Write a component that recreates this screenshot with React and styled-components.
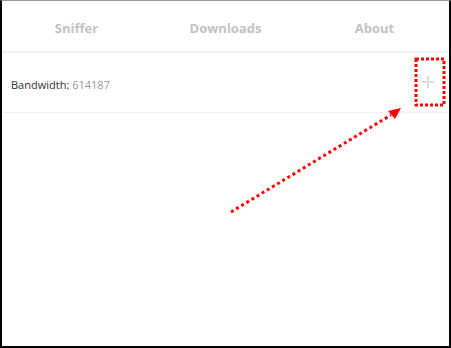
import React from "react";
import styled, { createGlobalStyle } from "styled-components";

const Global = createGlobalStyle`
  html, body { margin: 0; padding: 0; background: #fff; }
  body { font-family: "Open Sans", "Noto Sans", sans-serif; }
`;

const Frame = styled.div`
  position: relative;
  width: 451px;
  height: 348px;
  box-sizing: border-box;
  border: 2px solid #000;
  border-top: 1px solid #9a9a9a;
  background: #fff;
  overflow: hidden;
`;

const Tabs = styled.nav`
  display: grid;
  grid-template-columns: repeat(3, 1fr);
  height: 52px;
  box-sizing: border-box;
  padding-top: 3px;
  border-bottom: 2px solid #f1f1f1;
`;

const Tab = styled.div`
  display: flex;
  align-items: center;
  justify-content: center;
  font-size: 13px;
  font-weight: 700;
  color: ${({ active }) => (active ? "#555" : "#c3c3c3")};
`;

const Row = styled.div`
  display: flex;
  align-items: center;
  justify-content: space-between;
  height: 60px;
  box-sizing: border-box;
  padding: 4px 14px 0 9px;
  border-bottom: 1px solid #f1f1f1;
`;

const Label = styled.span`
  font-size: 11px;
  color: #333;
`;

const Value = styled.span`
  color: #9a9a9a;
`;

const AddBtn = styled.button`
  background: none;
  border: none;
  padding: 0;
  margin-top: -6px;
  width: 14px;
  height: 14px;
  display: flex;
  cursor: pointer;
`;

const Annotation = styled.svg`
  position: absolute;
  left: 0;
  top: 0;
  pointer-events: none;
`;

export default function App() {
  return (
    <>
      <Global />
      <Frame>
        <Tabs>
          <Tab>Sniffer</Tab>
          <Tab>Downloads</Tab>
          <Tab>About</Tab>
        </Tabs>
        <Row>
          <Label>
            Bandwidth: <Value>614187</Value>
          </Label>
          <AddBtn title="Add">
            <svg width="14" height="14" viewBox="0 0 14 14">
              <path d="M7 1v12M1 7h12" stroke="#dcdcdc" strokeWidth="2" />
            </svg>
          </AddBtn>
        </Row>
        <Annotation width="451" height="348" viewBox="0 0 451 348">
          <rect
            x="414"
            y="58"
            width="28"
            height="46"
            fill="none"
            stroke="#f00"
            strokeWidth="3"
            strokeDasharray="3 2"
          />
          <line
            x1="229"
            y1="211"
            x2="389"
            y2="114"
            stroke="#f00"
            strokeWidth="3"
            strokeDasharray="3 3"
          />
          <polygon points="399,107 386,110 393,118" fill="#f00" />
        </Annotation>
      </Frame>
    </>
  );
}
